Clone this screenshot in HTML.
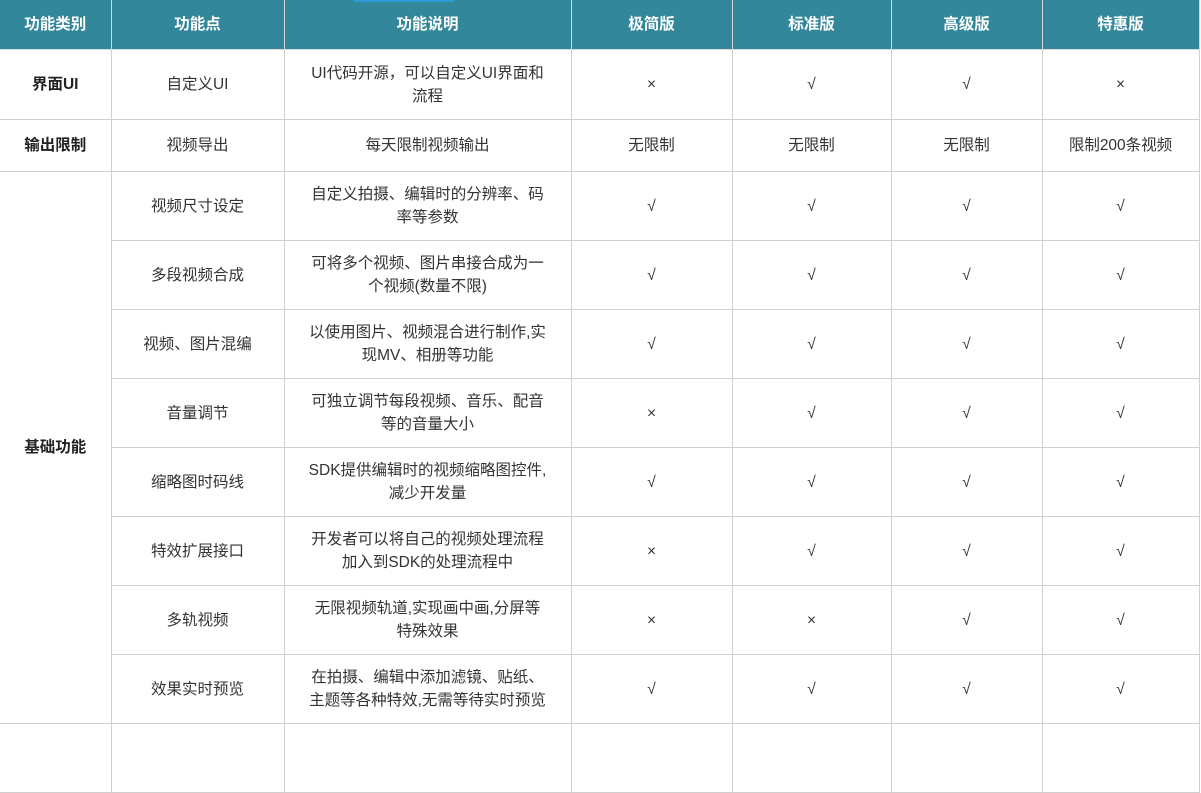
<!DOCTYPE html>
<html><head><meta charset="utf-8"><style>
body{margin:0;background:#fff;width:1201px;height:727px;overflow:hidden;position:relative}
table{border-collapse:collapse;table-layout:fixed;font-family:"Liberation Sans","Noto Sans CJK SC",sans-serif;font-size:15.5px;color:#333;position:absolute;left:0;top:0}
td,th{border:1px solid #cfcfcf;text-align:center;vertical-align:middle;padding:0;line-height:23px;white-space:nowrap}
th{background:#32879b;color:#fff;font-weight:bold;font-size:15.5px;height:49px;border-color:#d8d8d8;border-top:none}
td.b{font-weight:bold;color:#222}
tr.r td{height:68px}
.bar{position:absolute;left:354px;top:0;width:100px;height:2px;background:#2a9ad8}
</style></head><body>
<table>
<colgroup><col style="width:111px"><col style="width:173px"><col style="width:287px"><col style="width:161px"><col style="width:159px"><col style="width:151px"><col style="width:157px"></colgroup>
<tr><th style="border-left:none">功能类别</th><th>功能点</th><th>功能说明</th><th>极简版</th><th>标准版</th><th>高级版</th><th>特惠版</th></tr>
<tr style="height:70px"><td class="b" style="border-left:none">界面UI</td><td>自定义UI</td><td>UI代码开源，可以自定义UI界面和<br>流程</td><td>×</td><td>√</td><td>√</td><td>×</td></tr>
<tr style="height:52px"><td class="b" style="border-left:none">输出限制</td><td>视频导出</td><td>每天限制视频输出</td><td>无限制</td><td>无限制</td><td>无限制</td><td>限制200条视频</td></tr>
<tr class="r"><td class="b" rowspan="8" style="border-left:none">基础功能</td><td>视频尺寸设定</td><td>自定义拍摄、编辑时的分辨率、码<br>率等参数</td><td>√</td><td>√</td><td>√</td><td>√</td></tr>
<tr class="r"><td>多段视频合成</td><td>可将多个视频、图片串接合成为一<br>个视频(数量不限)</td><td>√</td><td>√</td><td>√</td><td>√</td></tr>
<tr class="r"><td>视频、图片混编</td><td>以使用图片、视频混合进行制作,实<br>现MV、相册等功能</td><td>√</td><td>√</td><td>√</td><td>√</td></tr>
<tr class="r"><td>音量调节</td><td>可独立调节每段视频、音乐、配音<br>等的音量大小</td><td>×</td><td>√</td><td>√</td><td>√</td></tr>
<tr class="r"><td>缩略图时码线</td><td>SDK提供编辑时的视频缩略图控件,<br>减少开发量</td><td>√</td><td>√</td><td>√</td><td>√</td></tr>
<tr class="r"><td>特效扩展接口</td><td>开发者可以将自己的视频处理流程<br>加入到SDK的处理流程中</td><td>×</td><td>√</td><td>√</td><td>√</td></tr>
<tr class="r"><td>多轨视频</td><td>无限视频轨道,实现画中画,分屏等<br>特殊效果</td><td>×</td><td>×</td><td>√</td><td>√</td></tr>
<tr class="r"><td>效果实时预览</td><td>在拍摄、编辑中添加滤镜、贴纸、<br>主题等各种特效,无需等待实时预览</td><td>√</td><td>√</td><td>√</td><td>√</td></tr>
<tr class="r"><td style="border-left:none"></td><td></td><td></td><td></td><td></td><td></td><td></td></tr>
</table>
<div class="bar"></div>
</body></html>
